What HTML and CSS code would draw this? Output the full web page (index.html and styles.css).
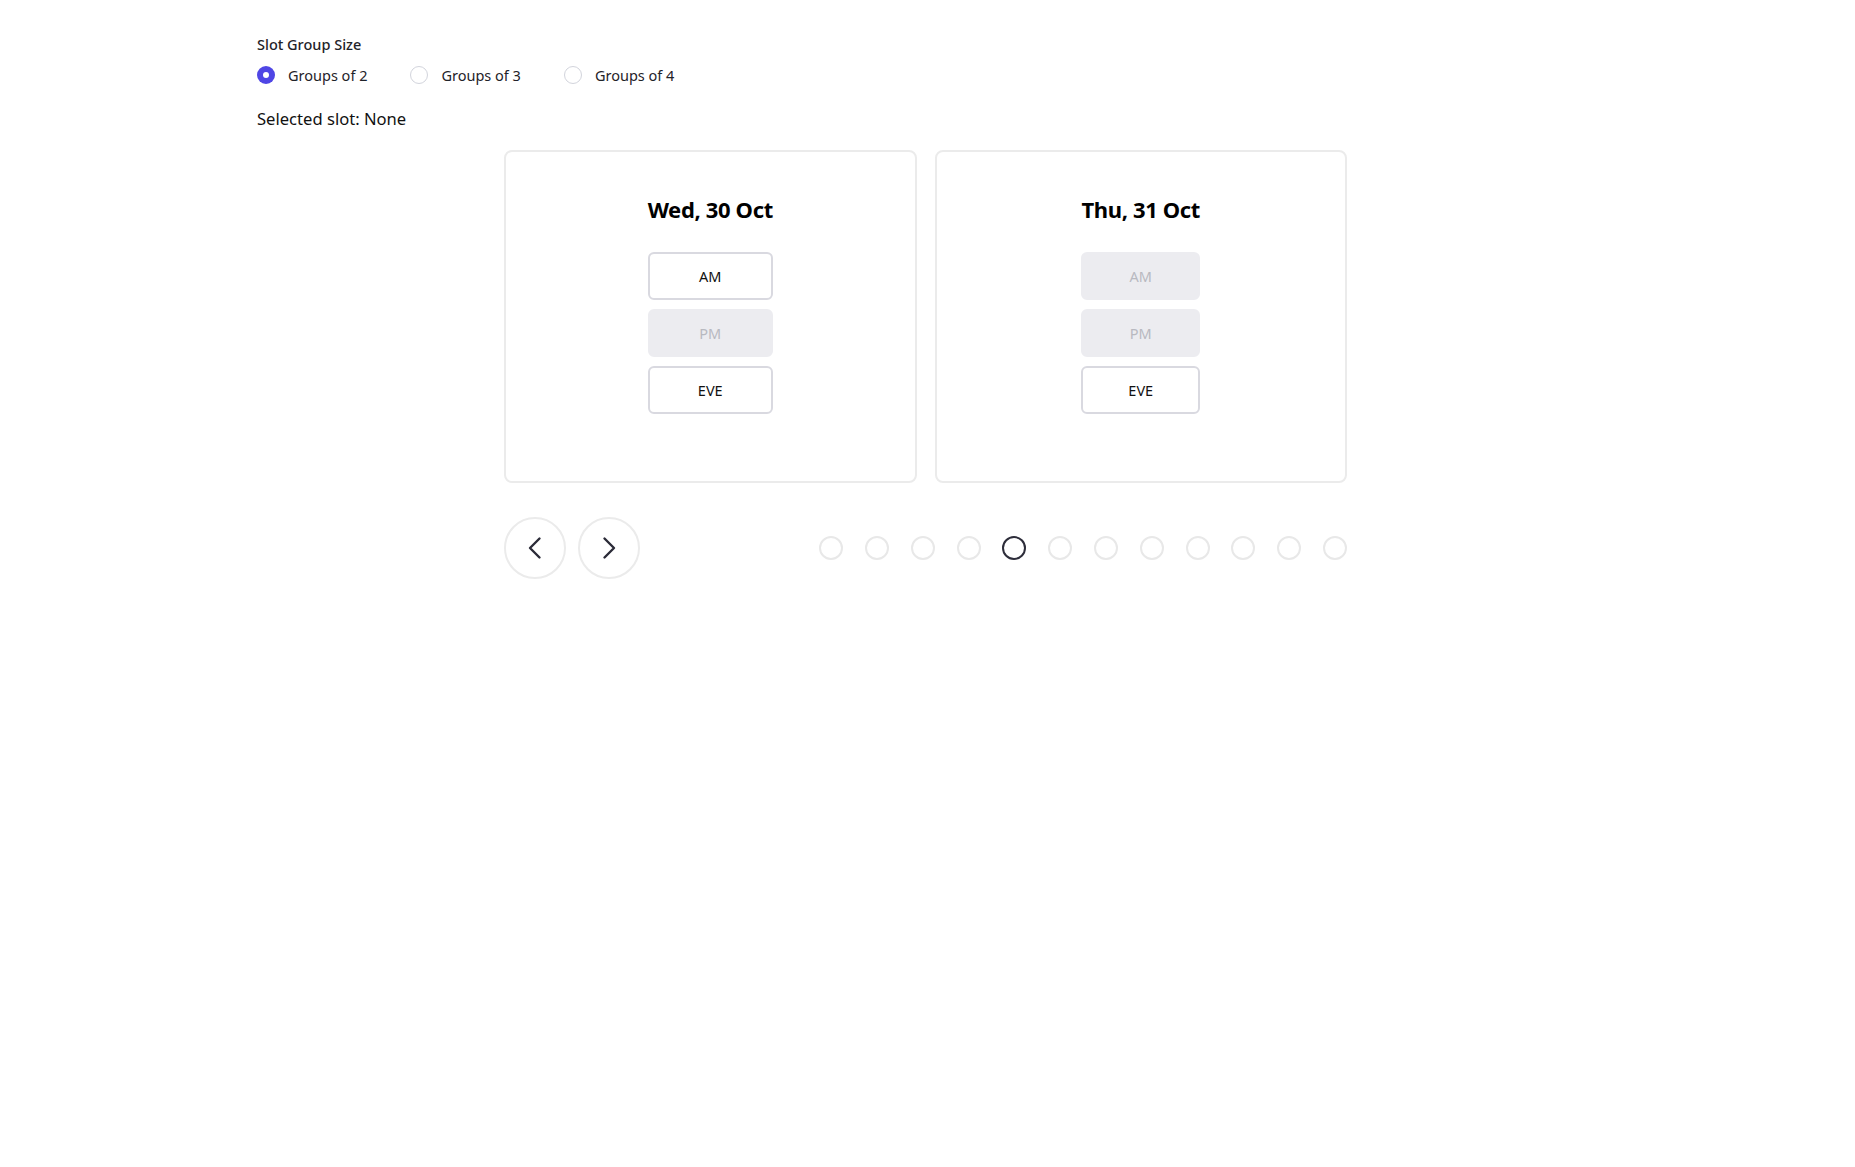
FILE: index.html
```html
<!DOCTYPE html>
<html lang="en">
<head>
<meta charset="utf-8">
<title>Slot picker</title>
<link rel="stylesheet" href="styles.css">
</head>
<body>
<div class="page">
  <div class="settings">
    <div class="settings-title">Slot Group Size</div>
    <div class="radio-group">
      <label class="radio-option"><span class="radio radio-checked"></span><span class="radio-label">Groups of 2</span></label>
      <label class="radio-option"><span class="radio"></span><span class="radio-label">Groups of 3</span></label>
      <label class="radio-option"><span class="radio"></span><span class="radio-label">Groups of 4</span></label>
    </div>
  </div>
  <div class="selected">Selected slot: None</div>

  <div class="carousel">
    <div class="cards">
      <div class="card">
        <div class="day">
          <div class="day-title">Wed, 30 Oct</div>
          <div class="slots">
            <button class="slot">AM</button>
            <button class="slot slot-disabled">PM</button>
            <button class="slot">EVE</button>
          </div>
        </div>
      </div>
      <div class="card">
        <div class="day">
          <div class="day-title">Thu, 31 Oct</div>
          <div class="slots">
            <button class="slot slot-disabled">AM</button>
            <button class="slot slot-disabled">PM</button>
            <button class="slot">EVE</button>
          </div>
        </div>
      </div>
    </div>
    <div class="controls">
      <div class="nav">
        <button class="nav-btn" aria-label="Previous">
          <svg width="24" height="24" viewBox="0 0 24 24"><path d="M16.5 2.5 L7 12 L16.5 21.5" fill="none" stroke="#2b2b38" stroke-width="2.4" stroke-linecap="round" stroke-linejoin="round"/></svg>
        </button>
        <button class="nav-btn" aria-label="Next">
          <svg width="24" height="24" viewBox="0 0 24 24"><path d="M7.5 2.5 L17 12 L7.5 21.5" fill="none" stroke="#2b2b38" stroke-width="2.4" stroke-linecap="round" stroke-linejoin="round"/></svg>
        </button>
      </div>
      <div class="dots">
        <span class="dot"></span>
        <span class="dot"></span>
        <span class="dot"></span>
        <span class="dot"></span>
        <span class="dot dot-active"></span>
        <span class="dot"></span>
        <span class="dot"></span>
        <span class="dot"></span>
        <span class="dot"></span>
        <span class="dot"></span>
        <span class="dot"></span>
        <span class="dot"></span>
      </div>
    </div>
  </div>
</div>
</body>
</html>
```

FILE: styles.css
```css
* { box-sizing: border-box; }

html, body {
  margin: 0;
  padding: 0;
  background: #ffffff;
}

body {
  font-family: "Noto Sans", "Open Sans", "Liberation Sans", sans-serif;
  color: #111111;
}

.page {
  padding: 34px 261px 40px 257px;
}

.settings-title {
  font-size: 14.5px;
  line-height: 20px;
  font-weight: 500;
  color: #1f2329;
}

.radio-group {
  display: flex;
  align-items: center;
  margin-top: 11px;
}

.radio-option {
  display: flex;
  align-items: center;
  gap: 13px;
  margin-right: 43px;
}

.radio {
  width: 18px;
  height: 18px;
  border-radius: 50%;
  border: 1px solid #d2d4dc;
  background: #ffffff;
  position: relative;
  flex: none;
}

.radio-checked {
  border: none;
  background: #4f46e5;
}

.radio-checked::after {
  content: "";
  position: absolute;
  left: 6px;
  top: 6px;
  width: 6px;
  height: 6px;
  border-radius: 50%;
  background: #ffffff;
}

.radio-label {
  font-size: 14.5px;
  line-height: 20px;
  color: #1f2329;
}

.selected {
  margin-top: 22px;
  font-size: 16.6px;
  line-height: 24px;
  color: #111111;
}

.carousel {
  width: 843px;
  margin: 19px auto 0;
}

.cards {
  display: flex;
  gap: 18px;
}

.card {
  flex: 1;
  height: 333px;
  border: 2px solid #ebebeb;
  border-radius: 8px;
  padding-top: 41px;
  display: flex;
  justify-content: center;
}

.day {
  display: inline-flex;
  flex-direction: column;
  align-items: stretch;
}

.day-title {
  font-size: 22px;
  line-height: 33px;
  font-weight: 700;
  letter-spacing: -0.35px;
  color: #000000;
  text-align: center;
  white-space: nowrap;
}

.slots {
  display: flex;
  flex-direction: column;
  gap: 9px;
  margin-top: 26px;
}

.slot {
  height: 48px;
  border: 2px solid #d9d9e0;
  border-radius: 6px;
  background: #ffffff;
  font-family: inherit;
  font-size: 14.5px;
  color: #111111;
  padding: 0;
}

.slot-disabled {
  border-color: #ececf0;
  background: #ececf0;
  color: #b8b9c0;
}

.controls {
  display: flex;
  justify-content: space-between;
  align-items: center;
  margin-top: 34px;
}

.nav {
  display: flex;
  gap: 12px;
}

.nav-btn {
  width: 62px;
  height: 62px;
  border-radius: 50%;
  border: 2px solid #ebebeb;
  background: #ffffff;
  display: flex;
  align-items: center;
  justify-content: center;
  padding: 0;
}

.dots {
  display: flex;
  gap: 21.8px;
}

.dot {
  width: 24px;
  height: 24px;
  border-radius: 50%;
  border: 2px solid #e8e8e8;
}

.dot-active {
  border-color: #2d2d3a;
}
```
